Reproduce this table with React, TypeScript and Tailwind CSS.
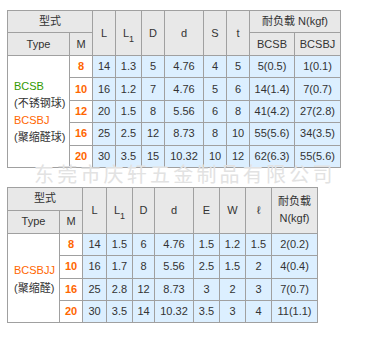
import React from "react";

const F = { fontFamily: '"Liberation Sans", Arial, "Noto Sans CJK SC", sans-serif' };

const th = "border border-[#a0a0a0] bg-[#e8e8e8] font-normal text-center p-0";
const td = "border border-[#a0a0a0] bg-[#dcefff] text-center p-0";
const tm = "border border-[#a0a0a0] bg-white text-center p-0 font-bold text-[#ff6600]";

const L1 = () => (
  <span>
    L<sub className="text-[9px] align-[-3px]">1</sub>
  </span>
);

const rows1 = [
  ["8", "14", "1.3", "5", "4.76", "4", "5", "5(0.5)", "1(0.1)"],
  ["10", "16", "1.2", "7", "4.76", "5", "6", "14(1.4)", "7(0.7)"],
  ["12", "20", "1.5", "8", "5.56", "6", "8", "41(4.2)", "27(2.8)"],
  ["16", "25", "2.5", "12", "8.73", "8", "10", "55(5.6)", "34(3.5)"],
  ["20", "30", "3.5", "15", "10.32", "10", "12", "62(6.3)", "55(5.6)"],
];

const rows2 = [
  ["8", "14", "1.5", "6", "4.76", "1.5", "1.2", "1.5", "2(0.2)"],
  ["10", "16", "1.7", "8", "5.56", "2.5", "1.5", "2", "4(0.4)"],
  ["16", "25", "2.8", "12", "8.73", "3", "2", "3", "7(0.7)"],
  ["20", "30", "3.5", "14", "10.32", "3.5", "3", "4", "11(1.1)"],
];

export default function App() {
  return (
    <div className="relative w-[369px] h-[339px] bg-white text-[#333] text-[11px] leading-none" style={F}>
      <div className="flex flex-col gap-[19px] pt-[10px] pl-[7px]">
        <table className="border-collapse table-fixed w-[334px]">
          <colgroup>
            {[62, 23, 23, 26, 23, 39, 23, 23, 45, 46].map((w, i) => (
              <col key={i} style={{ width: w }} />
            ))}
          </colgroup>
          <thead>
            <tr className="h-[22px]">
              <th colSpan={2} className={th}>型式</th>
              <th rowSpan={2} className={th}>L</th>
              <th rowSpan={2} className={th}><L1 /></th>
              <th rowSpan={2} className={th}>D</th>
              <th rowSpan={2} className={th}>d</th>
              <th rowSpan={2} className={th}>S</th>
              <th rowSpan={2} className={th}>t</th>
              <th colSpan={2} className={th}>耐负载 N(kgf)</th>
            </tr>
            <tr className="h-[23px]">
              <th className={th}>Type</th>
              <th className={th}>M</th>
              <th className={th}>BCSB</th>
              <th className={th}>BCSBJ</th>
            </tr>
          </thead>
          <tbody>
            {rows1.map((r, i) => (
              <tr key={i} className="h-[22.4px]">
                {i === 0 && (
                  <td rowSpan={5} className="border border-[#a0a0a0] bg-white text-left pl-[6px] align-middle">
                    <div className="flex flex-col gap-[6px] pt-[2px]">
                      <span className="text-[#339900]">BCSB</span>
                      <span>(不锈钢球)</span>
                      <span className="text-[#ff6600]">BCSBJ</span>
                      <span>(聚缩醛球)</span>
                    </div>
                  </td>
                )}
                <td className={tm}>{r[0]}</td>
                {r.slice(1).map((c, j) => (
                  <td key={j} className={td}>{c}</td>
                ))}
              </tr>
            ))}
          </tbody>
        </table>

        <table className="border-collapse table-fixed w-[310px]">
          <colgroup>
            {[52, 23, 24, 26, 22, 39, 26, 26, 26, 46].map((w, i) => (
              <col key={i} style={{ width: w }} />
            ))}
          </colgroup>
          <thead>
            <tr className="h-[23px]">
              <th colSpan={2} className={th}>型式</th>
              <th rowSpan={2} className={th}>L</th>
              <th rowSpan={2} className={th}><L1 /></th>
              <th rowSpan={2} className={th}>D</th>
              <th rowSpan={2} className={th}>d</th>
              <th rowSpan={2} className={th}>E</th>
              <th rowSpan={2} className={th}>W</th>
              <th rowSpan={2} className={th}>ℓ</th>
              <th rowSpan={2} className={th + " leading-[17px]"}>
                耐负载
                <br />
                N(kgf)
              </th>
            </tr>
            <tr className="h-[23px]">
              <th className={th}>Type</th>
              <th className={th}>M</th>
            </tr>
          </thead>
          <tbody>
            {rows2.map((r, i) => (
              <tr key={i} className="h-[22.3px]">
                {i === 0 && (
                  <td rowSpan={4} className="border border-[#a0a0a0] bg-white text-left pl-[6px] align-middle">
                    <div className="flex flex-col gap-[7px] pt-[2px]">
                      <span className="text-[#ff6600]">BCSBJJ</span>
                      <span>(聚缩醛)</span>
                    </div>
                  </td>
                )}
                <td className={tm}>{r[0]}</td>
                {r.slice(1).map((c, j) => (
                  <td key={j} className={td}>{c}</td>
                ))}
              </tr>
            ))}
          </tbody>
        </table>
      </div>

      <div
        className="absolute left-[34px] top-[164px] text-[20px] leading-[20px] tracking-[3.2px] text-[#e2e2e2] pointer-events-none whitespace-nowrap"
        style={{ fontFamily: '"Noto Sans CJK SC", sans-serif' }}
      >
        东莞市庆轩五金制品有限公司
      </div>
    </div>
  );
}
